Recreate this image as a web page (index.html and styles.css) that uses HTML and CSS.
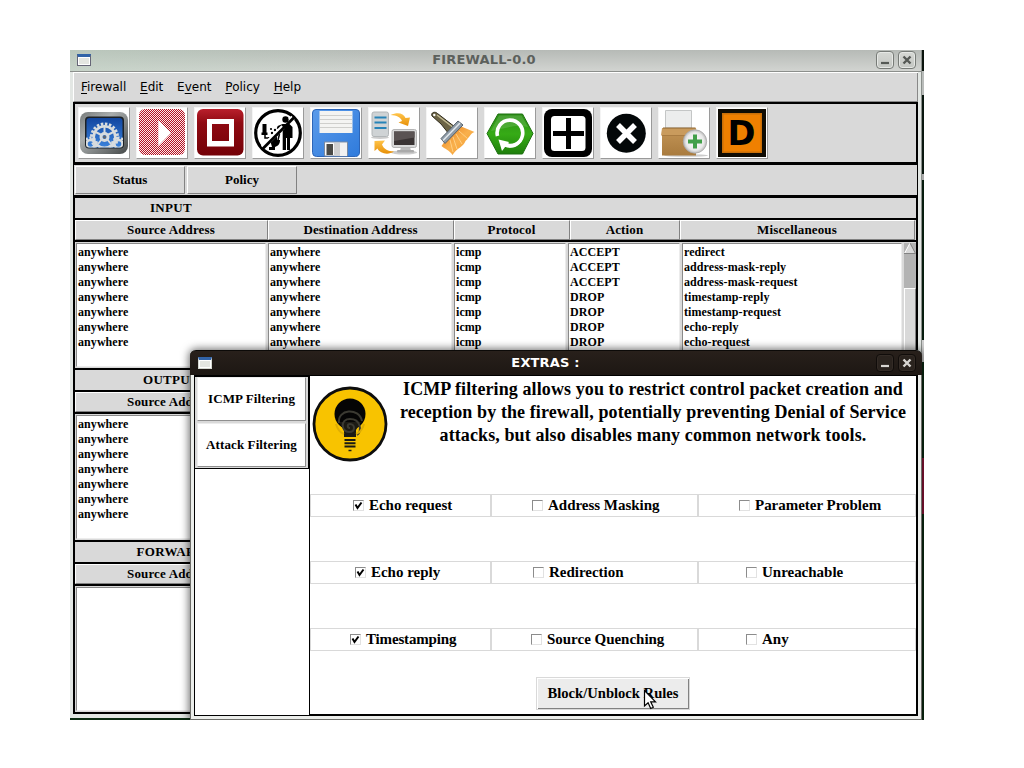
FILE: index.html
```html
<!DOCTYPE html>
<html lang="en">
<head>
<meta charset="utf-8">
<title>FIREWALL-0.0</title>
<link rel="stylesheet" href="styles.css">
</head>
<body>
<div class="desktop">
  <main class="window">
    <header class="titlebar">
      <span class="win-icon"></span>
      <span class="title">FIREWALL-0.0</span>
      <span class="win-btn"><svg viewBox="0 0 16 16"><path d="M4 11h8" stroke-width="2.2"/></svg></span>
      <span class="win-btn"><svg viewBox="0 0 16 16"><path d="M4.500 4.500l7 7M11.500 4.500l-7 7" stroke-width="2.4"/></svg></span>
    </header>
    <div class="client">
      <nav class="menu">
        <span><u>F</u>irewall</span><span><u>E</u>dit</span><span>E<u>v</u>ent</span><span><u>P</u>olicy</span><span><u>H</u>elp</span>
      </nav>
      <div class="toolbar">
        <button class="tool"><svg viewBox="0 0 48 48">
          <defs>
            <linearGradient id="metal" x1="0" y1="0" x2="1" y2="1"><stop offset="0" stop-color="#777b7b"/><stop offset=".35" stop-color="#a9adad"/><stop offset="1" stop-color="#454949"/></linearGradient>
            <linearGradient id="blue" x1="0" y1="0" x2="0" y2="1"><stop offset="0" stop-color="#1246a0"/><stop offset="1" stop-color="#3b83dc"/></linearGradient>
            <clipPath id="scr"><rect x="6" y="8.500" width="37" height="30" rx="3"/></clipPath>
          </defs>
          <rect x="0" y="3" width="48" height="42" rx="8" fill="url(#metal)"/>
          <rect x="5" y="7.500" width="39" height="32" rx="4" fill="#1c2126"/>
          <rect x="6.500" y="9" width="36" height="29.500" rx="3" fill="url(#blue)"/>
          <g clip-path="url(#scr)" fill="none" stroke="#d8dcde">
            <circle cx="24.500" cy="28" r="13" stroke-width="3" stroke-dasharray="2.500 1.584"/>
            <circle cx="24.500" cy="28" r="10.800" stroke-width="2.600"/>
            <circle cx="24.500" cy="28" r="3.500" stroke-width="3"/>
            <path d="M24.500 24v-6M21.500 26l-6-3M27.500 26l6-3M22 30l-4 5M27 30l4 5" stroke-width="2"/>
            <circle cx="10.500" cy="35" r="6" stroke-width="3" stroke-dasharray="2.200 1.570"/>
            <circle cx="10.500" cy="35" r="4" stroke-width="2.500"/>
            <circle cx="38.500" cy="35" r="6" stroke-width="3" stroke-dasharray="2.200 1.570"/>
            <circle cx="38.500" cy="35" r="4" stroke-width="2.500"/>
          </g>
          <circle cx="24.500" cy="28" r="1.500" fill="#666"/>
        </svg></button>
        <button class="tool"><svg class="play" viewBox="1 0 46 46"><path d="M20.300 11v26L33 24z" fill="#fff"/></svg></button>
        <button class="tool"><svg viewBox="0 0 48 48">
          <defs><linearGradient id="red" x1="0" y1="0" x2="0" y2="1"><stop offset="0" stop-color="#b9202c"/><stop offset=".3" stop-color="#8f0a12"/><stop offset="1" stop-color="#740006"/></linearGradient></defs>
          <rect x="1" y="0" width="46.500" height="46.500" rx="6" fill="url(#red)"/>
          <path fill="#fff" fill-rule="evenodd" d="M11 10h27v27.500H11zM16 15v17h17V15z"/>
        </svg></button>
        <button class="tool"><svg viewBox="0 0 48 48">
          <path d="M8.500 15h4v9h-4zM7.500 23.500h6v2.500h-6zM10 26v4M14 28h9v3h-9zM16 31h10c0 4-2 6-5 7v3h-6v-3h3z"/>
          <path d="M11 25v4h6M24 31l1.500-6" fill="none" stroke="#000" stroke-width="1.500"/>
          <circle cx="18" cy="24" r="1.200"/><circle cx="21" cy="21" r="1.200"/><circle cx="17" cy="20" r="1.100"/>
          <circle cx="31.500" cy="10.500" r="3.200"/>
          <path d="M28.500 15h7l3 3v11h-2.500v12h-3V29h-1v12h-3.300V22l-6-2.500 1-2.500z"/>
          <circle cx="24" cy="24" r="22.300" fill="none" stroke="#000" stroke-width="3.200"/>
          <path d="M8.500 38.500L29 18M36 11.500L39 8.500" stroke="#fff" stroke-width="4.600"/><path d="M8.500 40L40 8.500" stroke="#000" stroke-width="2.800"/>
        </svg></button>
        <button class="tool"><svg viewBox="0 0 48 48">
          <defs><linearGradient id="flop" x1="0" y1="0" x2="1" y2="1"><stop offset="0" stop-color="#5b9bea"/><stop offset="1" stop-color="#2f7bdc"/></linearGradient></defs>
          <path d="M4 .5h40a3.500 3.500 0 013.500 3.500v39a4 4 0 01-4 4.500H4.500A4 4 0 01.5 43.500V4A3.500 3.500 0 014 .5z" fill="url(#flop)" stroke="#2c65b8"/>
          <rect x="7.500" y="2" width="33" height="22" fill="#f4f4f2"/>
          <path d="M8 6.500h32M8 10.500h32M8 14.500h32M8 18.500h32" stroke="#cfcfcc"/>
          <path d="M12.500 33h23v14h-23z" fill="#fafafa" stroke="#7a8aa0"/><path d="M22 34h13v13H22z" fill="#d0d0d0"/><path d="M28 34h7v13h-7z" fill="#f2f2f2"/>
          <path d="M14.500 35h6.500v11h-6.500z" fill="#4a4a46"/>
        </svg></button>
        <button class="tool"><svg viewBox="0 0 48 48">
          <defs><linearGradient id="gold" x1="0" y1="0" x2="0" y2="1"><stop offset="0" stop-color="#ffc44a"/><stop offset="1" stop-color="#e79008"/></linearGradient></defs>
          <ellipse cx="34" cy="43.500" rx="13" ry="2" fill="#ccc"/><ellipse cx="10" cy="28.500" rx="9" ry="1.500" fill="#ccc"/>
          <rect x="2" y="3" width="16.500" height="24.500" rx="2" fill="#cfd3d5" stroke="#b2b6b8"/>
          <path d="M4.500 8.500h12M4.500 13.500h12M4.500 19h12" stroke="#2683b8" stroke-width="2"/>
          <path d="M20.500 6c7-3 13-2 15 3l4.500-.5-2 8.500-9.500-3.500 3.500-1.500c-1.500-4-5-5.500-11.500-6z" fill="url(#gold)"/>
          <path d="M4.500 32l10.500-.5-3 4c2 5 6 6.500 12 7-6 4-14 2-16.500-3L4.500 42z" fill="url(#gold)"/>
          <path d="M31 38h9l1 4H30z" fill="#bbb"/><rect x="27" y="41" width="17" height="2.500" rx="1" fill="#aaa"/>
          <rect x="22" y="20.500" width="24.500" height="18" rx="2" fill="#d9dada" stroke="#b5b5b5"/><rect x="24" y="22.500" width="20.500" height="13.500" fill="#3a3434"/><path d="M24 22.500h20.500v6L24 32z" fill="#5a5353"/>
        </svg></button>
        <button class="tool"><svg viewBox="0 0 48 48">
          <defs><linearGradient id="bristle" x1="0" y1="0" x2="1" y2="1"><stop offset="0" stop-color="#e87a18"/><stop offset=".5" stop-color="#f9b04c"/><stop offset="1" stop-color="#f39a2c"/></linearGradient></defs>
          <path d="M4 7c-1.500-3.500 3-5 5.500-2.500L27 18l-6 7L13 15z" fill="#6b6345" stroke="#2f2a1c"/>
          <path d="M9 6l17 13" stroke="#c3bb93" stroke-width="1.500"/>
          <circle cx="6.300" cy="6" r="1.200" fill="#fff"/>
          <path d="M17 32l15-15 14.500 6c-5 2-5 6-9 9-2 6-9 7-13 14-3-5-8-6-11-9z" fill="url(#bristle)"/>
          <path d="M22 31l3 12M25 28l4 12M28 25l6 10M31 22l9 8" stroke="#ffd084" fill="none"/>
          <path d="M13 29.500L30 12l5 4-18 18.500z" fill="#8f9ca8" stroke="#55606a"/><path d="M15 31.500L32 14" stroke="#e3e9ee" stroke-width="1.500"/>
        </svg></button>
        <button class="tool"><svg viewBox="0 0 48 48">
          <defs><linearGradient id="hex" x1="0" y1="0" x2="0" y2="1"><stop offset="0" stop-color="#2c8f17"/><stop offset=".5" stop-color="#36ab16"/><stop offset="1" stop-color="#1f7f0c"/></linearGradient></defs>
          <path d="M12 5h24.500L47 24.500 36.500 45H12L1 24.500z" fill="url(#hex)" stroke="#1d7010" stroke-linejoin="round"/>
          <path d="M13 6.500h22.500L42 18c-14-3-24 2-37 4z" fill="#fff" opacity=".13"/>
          <path d="M11.500 27A12.800 12.800 0 1118.500 35.500" fill="none" stroke="#fff" stroke-width="3.600"/>
          <path d="M12.500 30.500l10.500 2.500-7 9z" fill="#fff"/>
          <path d="M19 33c7 4 13 1 16-4l1.500 1c-3 8-11 11-19 7z" fill="#fff"/>
        </svg></button>
        <button class="tool"><svg viewBox="0 0 48 48">
          <rect width="48" height="48" rx="8"/><rect x="7" y="7" width="34.500" height="35" rx="3.500" fill="#fff"/>
          <path d="M9 24.500h31M24.500 9v31" stroke="#000" stroke-width="5"/>
        </svg></button>
        <button class="tool"><svg viewBox="0 0 48 48">
          <circle cx="24.300" cy="24.300" r="19.500" fill="#030708"/><path d="M16 16l17 17M33 16L16 33" stroke="#fff" stroke-width="5.500"/>
        </svg></button>
        <button class="tool"><svg viewBox="0 0 48 48">
          <defs><linearGradient id="carton" x1="0" y1="0" x2="0" y2="1"><stop offset="0" stop-color="#c39557"/><stop offset="1" stop-color="#a97b3e"/></linearGradient>
          <radialGradient id="ball"><stop offset="0" stop-color="#fff"/><stop offset=".75" stop-color="#e9e9e9"/><stop offset="1" stop-color="#b9b9b9"/></radialGradient></defs>
          <ellipse cx="26" cy="46.500" rx="22" ry="1.300" fill="#ccc"/>
          <path d="M5.500 1.500h26V19h-26z" fill="#eceded" stroke="#c4c6c6"/>
          <path d="M2 19h34v27.500H2z" fill="url(#carton)"/><path d="M2 19h34l1 7.500H1z" fill="#c99b5d"/><path d="M3 19h32.500" stroke="#8e6632"/><path d="M2 26.500h34" stroke="#a97c42"/>
          <circle cx="35" cy="32.500" r="11.700" fill="url(#ball)" stroke="#aaa" stroke-width=".8"/>
          <path d="M35 25.500v14M28 32.500h14" stroke="#42a04a" stroke-width="4"/>
        </svg></button>
        <button class="tool"><svg viewBox="0 0 48 48">
          <rect width="48" height="48" fill="#100c04"/><rect x="4" y="4" width="40" height="40" fill="#c96f08"/><rect x="5.500" y="5.500" width="37" height="37" fill="#f08000"/>
          <text x="9.600" y="36.300" class="letter-d">D</text>
        </svg></button>
      </div>
      <div class="tabs"><button class="tab">Status</button><button class="tab">Policy</button></div>

      <section class="chain">
        <h2>INPUT</h2>
        <div class="heads"><span>Source Address</span><span>Destination Address</span><span>Protocol</span><span>Action</span><span>Miscellaneous</span></div>
        <div class="lists">
          <div class="list">anywhere<br>anywhere<br>anywhere<br>anywhere<br>anywhere<br>anywhere<br>anywhere</div>
          <div class="list">anywhere<br>anywhere<br>anywhere<br>anywhere<br>anywhere<br>anywhere<br>anywhere</div>
          <div class="list">icmp<br>icmp<br>icmp<br>icmp<br>icmp<br>icmp<br>icmp</div>
          <div class="list">ACCEPT<br>ACCEPT<br>ACCEPT<br>DROP<br>DROP<br>DROP<br>DROP</div>
          <div class="list">redirect<br>address-mask-reply<br>address-mask-request<br>timestamp-reply<br>timestamp-request<br>echo-reply<br>echo-request</div>
          <div class="scroll"><svg viewBox="0 0 12 11"><path d="M6 0L12 11H0z" fill="#d9d9d9"/><path d="M6 0L.5 10.500" stroke="#fff"/><path d="M6 0l5.500 10.500H0" stroke="#828282" fill="none"/></svg><i class="thumb"></i></div>
        </div>
      </section>
      <section class="chain">
        <h2>OUTPUT</h2>
        <div class="heads"><span>Source Address</span><span></span><span></span><span></span><span></span></div>
        <div class="lists">
          <div class="list">anywhere<br>anywhere<br>anywhere<br>anywhere<br>anywhere<br>anywhere<br>anywhere</div>
          <div class="list"></div><div class="list"></div><div class="list"></div><div class="list"></div><div class="scroll"></div>
        </div>
      </section>
      <section class="chain">
        <h2>FORWARD</h2>
        <div class="heads"><span>Source Address</span><span></span><span></span><span></span><span></span></div>
        <div class="lists">
          <div class="list"></div><div class="list"></div><div class="list"></div><div class="list"></div><div class="list"></div><div class="scroll"></div>
        </div>
      </section>
    </div>
  </main>

  <div class="dialog">
    <header class="titlebar dark">
      <span class="win-icon"></span>
      <span class="title">EXTRAS :</span>
      <span class="win-btn"><svg viewBox="0 0 16 16"><path d="M4 11h8" stroke-width="2.200"/></svg></span>
      <span class="win-btn"><svg viewBox="0 0 16 16"><path d="M4.500 4.500l7 7M11.500 4.500l-7 7" stroke-width="2.400"/></svg></span>
    </header>
    <div class="dialog-body">
      <aside class="side"><div class="side-box"><button>ICMP Filtering</button><button>Attack Filtering</button></div></aside>
      <div class="pane">
        <div class="intro">
          <svg class="bulb" viewBox="0 0 76 76">
            <circle cx="38" cy="38" r="36" fill="#f8c300" stroke="#0d0d0d" stroke-width="2.800"/>
            <circle cx="38" cy="28" r="15.500" fill="#050505"/>
            <path d="M27 36h22l-5 8v7H32v-7z" fill="#1b1a14"/>
            <g fill="none" stroke="#3b3a32" stroke-width="2"><path d="M38 42c-3 0-3-4 0-4 5 0 6 8-1 8-8 0-9-13 1-13 11 0 12 12 7 16M27 37c-2-14 20-16 23-2"/></g>
            <path d="M24 38c2 7 5 9 8 10M52 38c-2 7-5 9-8 10" stroke="#dfae04" stroke-width="2" fill="none"/>
            <path d="M32.500 54h11M32.500 57.300h11M32.500 60.600h11" stroke="#1b1a14" stroke-width="2"/><path d="M36.500 64.500h3" stroke="#1b1a14" stroke-width="1.500"/>
          </svg>
          <p>ICMP filtering allows you to restrict control packet creation and<br>reception by the firewall, potentially preventing Denial of Service<br>attacks, but also disables many common network tools.</p>
        </div>
        <div class="checks">
          <label class="cell p42"><i class="box"><svg viewBox="0 0 11 11"><path d="M2.500 4.500L4.500 8l4-5.500"/></svg></i>Echo request</label>
          <label class="cell p40"><i class="box"></i>Address Masking</label>
          <label class="cell p40"><i class="box"></i>Parameter Problem</label>
          <label class="cell p44"><i class="box"><svg viewBox="0 0 11 11"><path d="M2.500 4.500L4.500 8l4-5.500"/></svg></i>Echo reply</label>
          <label class="cell p41"><i class="box"></i>Redirection</label>
          <label class="cell p47"><i class="box"></i>Unreachable</label>
          <label class="cell p39 tight"><i class="box"><svg viewBox="0 0 11 11"><path d="M2.500 4.500L4.500 8l4-5.500"/></svg></i>Timestamping</label>
          <label class="cell p39"><i class="box"></i>Source Quenching</label>
          <label class="cell p47"><i class="box"></i>Any</label>
        </div>
        <button class="apply">Block/Unblock Rules</button>
      </div>
    </div>
  </div>
  <svg class="cursor" viewBox="0 0 14 21"><path d="M1.500 1.500v15.500l3.600-3.200 2.600 5.700 2.600-1.200-2.600-5.500h4.800z" fill="#fff" stroke="#000" stroke-width="1.200"/></svg>
</div>
</body>
</html>
```

FILE: styles.css
```css
* { box-sizing: border-box; }
body { margin: 0; background: #fff; width: 1024px; height: 768px; overflow: hidden; }
button { padding: 0; margin: 0; font: inherit; color: #000; border-radius: 0; }
svg { display: block; }

.desktop {
  position: relative;
  width: 854px;
  height: 670px;
  margin: 50px 0 0 70px;
  overflow: hidden;
  background: linear-gradient(#0a140d 0 21px, #b9bcba 21px 45px, #09170f 45px 124px, #aaa 124px 130px, #061c0e 130px 290px, #d0d0d0 290px 312px, #0a2a12 312px 408px, #8f1438 408px 464px, #0b2c12 464px);
  font: bold 13px/20px "Liberation Serif", "Times New Roman", serif;
  color: #000;
}

.window {
  display: flex;
  flex-direction: column;
  width: 852px;
  height: 668px;
  border-right: 1px solid #8a8f8b;
  background: #e3e7e4;
}
.titlebar {
  display: flex;
  align-items: center;
  gap: 4px;
  height: 22px;
  flex: none;
  padding: 0 5px 2px 7px;
  background: linear-gradient(90deg, rgba(190, 212, 194, .5), rgba(200, 205, 200, 0) 40%), linear-gradient(#b6bab6, #d2d4d1);
  border-bottom: 1px solid #8c8f8c;
  font: bold 13px/18px "DejaVu Sans", sans-serif;
  color: #5c605c;
}
.title { flex: 1; text-align: center; letter-spacing: .17px; padding-left: 1px; }
.win-icon { width: 14px; height: 12px; border: 1px solid #667; border-top: 3px solid #3163a8; background: #e4e6e1; box-shadow: inset 0 0 0 1px #fff; }
.win-btn { width: 18px; height: 18px; border: 1px solid #777b77; border-radius: 4px; background: linear-gradient(#d6d8d4, #c3c6c2); box-shadow: inset 0 0 0 1px #e6e8e5; }
.win-btn svg { width: 16px; height: 16px; fill: none; stroke: #555955; }

.client {
  display: flex;
  flex-direction: column;
  width: 845px;
  height: 642px;
  margin-left: 3px;
  background: #d9d9d9;
  border-top: 1px solid #fff;
}
.menu {
  display: flex;
  gap: 13.800px;
  height: 29px;
  flex: none;
  padding: 0 0 0 7px;
  border-left: 1px solid #fff;
  border-right: 1px solid #888;
  border-bottom: 1px solid #888;
  font: 12px/28px "DejaVu Sans", sans-serif;
}
.menu u { text-underline-offset: 2px; }
.toolbar {
  display: flex;
  gap: 6px;
  height: 63px;
  flex: none;
  padding: 3px 0 0 3px;
  border: 2px solid #000;
  border-bottom-width: 3px;
}
.tool {
  width: 52px;
  height: 52px;
  padding: 1px;
  background: #fff;
  border: 1px solid;
  border-color: #f4f4f4 #9a9a9a #9a9a9a #f4f4f4;
}
.tool svg { width: 48px; height: 48px; }
.tool .play {
  width: 46px;
  height: 46px;
  margin: 0 1px 2px;
  border-radius: 6px;
  background: repeating-conic-gradient(#b01224 0 25%, #ffe8e8 0 50%) 0 0 / 2px 2px;
}
.letter-d { font: bold 33.700px "DejaVu Sans", sans-serif; }
.tabs {
  display: flex;
  gap: 2px;
  height: 30px;
  flex: none;
  padding: 1px 0 0 1px;
  border-left: 1px solid #000;
  border-right: 1px solid #000;
}
.tab { width: 110px; height: 28px; background: #d9d9d9; border: 1px solid; border-color: #fff #828282 #828282 #fff; }

.chain {
  flex: none;
  height: 172px;
  display: flex;
  flex-direction: column;
  border: solid #000;
  border-width: 2px 2px 0;
  padding: 0;
}
.chain:first-of-type { height: 173px; border-top-width: 3px; }
.chain:last-of-type { border-bottom-width: 2px; height: 174px; }
.chain h2 { margin: 0; height: 20px; width: 192px; text-align: center; font: inherit; letter-spacing: .3px; flex: none; }
.heads {
  display: grid;
  grid-template-columns: 193px 186px 116px 110px 235px;
  height: 24px;
  flex: none;
  border: solid #000;
  border-width: 2px 0;
  text-align: center;
  line-height: 18px;
}
.heads span { border: 1px solid; border-color: #fff #828282 #828282 #fff; letter-spacing: .15px; padding-right: 1px; }
.lists {
  flex: 1;
  display: grid;
  grid-template-columns: 193px 186px 114px 114px 222px 12px;
  padding-top: 1px;
}
.list {
  margin: 0 2px 1px 0;
  padding: 1px 0 0 1px;
  background: #fff;
  border: 1px solid #8a8a8a;
  border-right-color: #ececec;
  border-bottom-color: #ececec;
  font-size: 12px;
  line-height: 15px;
  letter-spacing: .07px;
  white-space: nowrap;
}
.list:first-child { margin-left: 1px; }
.scroll { background: #b3b3b3; display: flex; flex-direction: column; }
.scroll svg { width: 12px; height: 11px; }
.thumb { margin-top: 34px; flex: 1; background: #d9d9d9; border: 1px solid; border-color: #fff #828282 #828282 #fff; }

.dialog {
  position: absolute;
  left: 120px;
  top: 300px;
  width: 732px;
  height: 370px;
  display: flex;
  flex-direction: column;
  background: #eceeeb;
  border: 1px solid #6c6c68;
  border-top: 0;
  border-radius: 6px 6px 0 0;
  box-shadow: 0 0 9px 1px rgba(0, 0, 0, .6);
}
.titlebar.dark {
  height: 25px;
  margin: 0 -1px;
  padding: 0 6px 1px 8px;
  background: linear-gradient(#28201b, #1d1713);
  border: 0;
  border-top: 1px solid #0c0a08;
  border-radius: 6px 6px 0 0;
  color: #fff;
}
.dark .title { padding-left: 3px; }
.dark .win-btn { background: #2a231e; border-color: #100c0a; box-shadow: inset 0 0 0 1px #332b26; }
.dark .win-btn svg { stroke: #d8d6d2; }
.dark .win-icon { border-color: #d5d8d0; border-top-color: #3163a8; }
.dialog-body { display: flex; width: 724px; height: 341px; margin-left: 3px; background: #fff; }
.side { width: 115px; border: 1px solid #000; border-right: 0; flex: none; }
.side-box { display: flex; flex-direction: column; gap: 2px; height: 93px; border: solid #000; border-width: 1px 1px 1px 0; background: #d9d9d9; padding: 0 1px; }
.side-box button { height: 44px; margin: 0 1px 0 1px; background: #fff; border: 1px solid; border-color: #ececec #8f8f8f #8f8f8f #ececec; letter-spacing: .1px; }
.pane { flex: 1; display: flex; flex-direction: column; align-items: flex-start; border: solid #000; border-width: 1px 2px 2px 1px; }
.intro { display: flex; height: 118px; }
.bulb { width: 76px; height: 76px; margin: 10px 0 0 2px; flex: none; }
.intro p { margin: 2px 0 0 11.500px; width: 507px; font-size: 18px; line-height: 23px; letter-spacing: .1px; text-align: center; white-space: nowrap; }
.checks { display: grid; grid-template-columns: 181px 207px 218px; grid-auto-rows: 23px; row-gap: 44px; font-size: 15px; letter-spacing: -.02px; }
.cell { display: flex; align-items: center; gap: 5px; border: 1px solid #d9d9d9; line-height: 21px; white-space: nowrap; }
.cell.tight { letter-spacing: -.16px; }
.p39 { padding-left: 39px; }
.p40 { padding-left: 40px; }
.p41 { padding-left: 41px; }
.p42 { padding-left: 42px; }
.p44 { padding-left: 44px; }
.p47 { padding-left: 47px; }
.box { width: 11px; height: 11px; background: #fff; border: 1px solid; border-color: #8c8c8c #e2e2e2 #e2e2e2 #8c8c8c; }
.box svg { width: 11px; height: 11px; margin: -1px; fill: none; stroke: #000; stroke-width: 2; }
.apply { margin: 26px 0 0 226px; padding-bottom: 2px; width: 154px; height: 33px; background: #ececec; border: 1px solid #d9d9d9; box-shadow: inset 1px 1px 0 #fff, inset -1px -1px 0 #828282; font-size: 14.600px; }
.cursor { position: absolute; left: 573px; top: 639px; width: 14px; height: 21px; }
```
